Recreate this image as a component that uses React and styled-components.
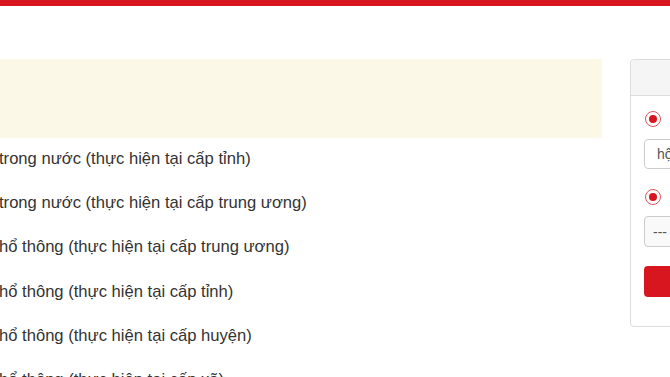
import React from "react";
import styled, { createGlobalStyle } from "styled-components";

const Global = createGlobalStyle`
  html, body { margin: 0; padding: 0; background: #fff; overflow: hidden; }
  body { font-family: "Liberation Sans", Arial, sans-serif; color: #333; }
  * { box-sizing: border-box; }
`;

const TopBar = styled.div`
  height: 6px;
  background: #d8161f;
`;

const Page = styled.div`
  display: flex;
  align-items: flex-start;
  gap: 28px;
  padding-top: 53px;
  width: 1000px;
`;

const MainCol = styled.div`
  width: 602px;
  flex: none;
`;

const Notice = styled.div`
  height: 79px;
  background: #fcf8e8;
`;

const List = styled.ul`
  list-style: none;
  margin: 0 0 0 -1px;
  padding: 11px 0 0;
`;

const Item = styled.li`
  font-size: 16.6px;
  line-height: 20px;
  height: 44.2px;
  color: #333;
  white-space: nowrap;
`;

const Card = styled.div`
  width: 260px;
  flex: none;
  border: 1px solid #ddd;
  border-radius: 4px;
  background: #fff;
`;

const CardHead = styled.div`
  height: 36px;
  background: #f5f5f5;
  border-bottom: 1px solid #ddd;
  border-radius: 4px 4px 0 0;
`;

const CardBody = styled.div`
  display: flex;
  flex-direction: column;
  padding: 15px 13px 29px;
`;

const RadioRow = styled.label`
  display: flex;
  align-items: center;
  gap: 14px;
  height: 16px;
  margin-top: ${(p) => p.$mt || 0}px;
  padding-left: 1px;
  font-size: 14px;
  white-space: nowrap;
`;

const Radio = styled.span`
  width: 16px;
  height: 16px;
  flex: none;
  border-radius: 50%;
  border: 1px solid #e0555b;
  display: flex;
  align-items: center;
  justify-content: center;
  &::after {
    content: "";
    width: 8px;
    height: 8px;
    border-radius: 50%;
    background: #d8161f;
  }
`;

const TextInput = styled.div`
  margin-top: ${(p) => p.$mt}px;
  height: ${(p) => p.$h}px;
  border: 1px solid #ccc;
  border-radius: 4px;
  background: ${(p) => p.$bg || "#fff"};
  font-size: 14px;
  color: #555;
  display: flex;
  align-items: center;
  padding-left: ${(p) => p.$pl}px;
  white-space: nowrap;
  overflow: hidden;
`;

const Button = styled.button`
  margin-top: 19px;
  height: 31px;
  border: none;
  border-radius: 4px;
  background: #d8161f;
  color: #fff;
  font-family: inherit;
  font-size: 14px;
`;

const items = [
  "trong nước (thực hiện tại cấp tỉnh)",
  "trong nước (thực hiện tại cấp trung ương)",
  "hổ thông (thực hiện tại cấp trung ương)",
  "hổ thông (thực hiện tại cấp tỉnh)",
  "hổ thông (thực hiện tại cấp huyện)",
  "hổ thông (thực hiện tại cấp xã)",
];

export default function App() {
  return (
    <>
      <Global />
      <TopBar />
      <Page>
        <MainCol>
          <Notice />
          <List>
            {items.map((t) => (
              <Item key={t}>{t}</Item>
            ))}
          </List>
        </MainCol>
        <Card>
          <CardHead />
          <CardBody>
            <RadioRow>
              <Radio />
              <span>Tìm theo tên thủ tục</span>
            </RadioRow>
            <TextInput $mt={12} $h={30} $pl={12}>hộ tịch</TextInput>
            <RadioRow $mt={20}>
              <Radio />
              <span>Tìm theo lĩnh vực</span>
            </RadioRow>
            <TextInput $mt={11} $h={31} $pl={8} $bg="#f9f9f9">--- Chọn lĩnh vực ---</TextInput>
            <Button>Tìm kiếm</Button>
          </CardBody>
        </Card>
      </Page>
    </>
  );
}
